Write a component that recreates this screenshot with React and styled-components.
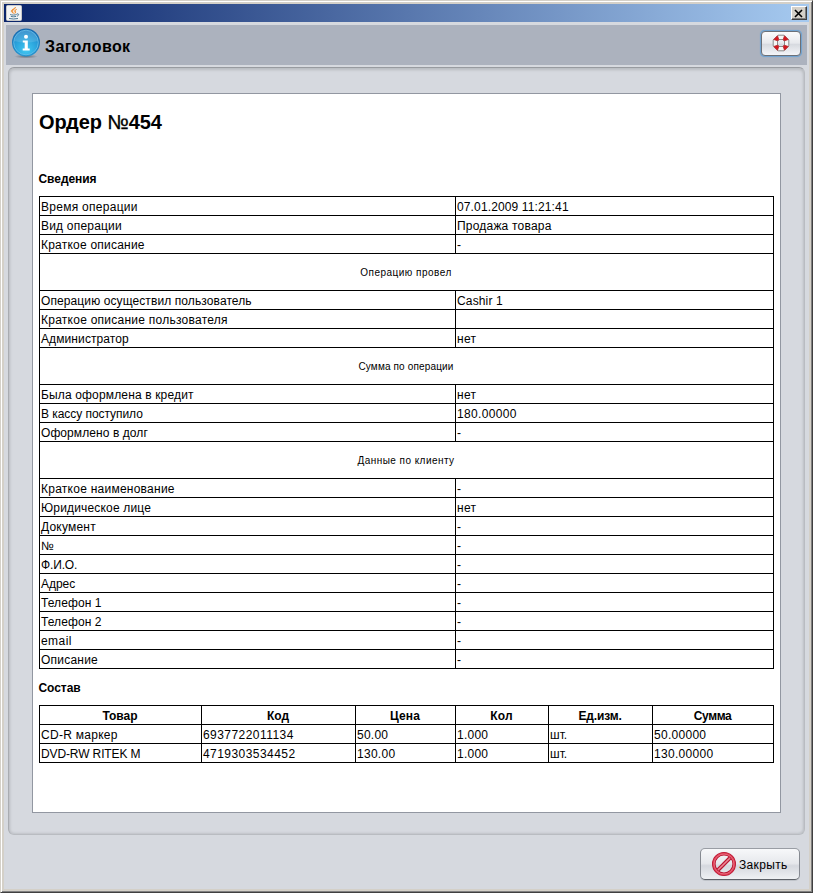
import React from "react";
import styled, { createGlobalStyle } from "styled-components";

const GlobalStyle = createGlobalStyle`
  * { box-sizing: border-box; }
  body { margin: 0; background: #d4d0c8; font-family: "Liberation Sans", Arial, sans-serif; color: #000; }
`;

const Frame = styled.div`
  width: 813px;
  height: 893px;
  padding: 2px;
  background: #d4d0c8;
  border: 1px solid;
  border-color: #d4d0c8 #404040 #404040 #d4d0c8;
  box-shadow: inset 1px 1px #fff, inset -1px -1px #808080;
`;
const Window = styled.div`
  display: flex;
  flex-direction: column;
  height: 100%;
  border: 1px solid #d4d0c8;
  background: #d6d9df;
`;
const TitleBar = styled.div`
  flex: none;
  display: flex;
  align-items: center;
  justify-content: space-between;
  height: 18px;
  padding: 0 2px;
  background: linear-gradient(90deg, #0a246a, #a6caf0);
`;
const AppIcon = styled.svg`
  display: block;
  width: 16px;
  height: 16px;
`;
const CloseBox = styled.button`
  display: flex;
  align-items: center;
  justify-content: center;
  width: 16px;
  height: 14px;
  padding: 0;
  background: #d4d0c8;
  border: 1px solid;
  border-color: #fff #404040 #404040 #fff;
  box-shadow: inset -1px -1px #808080;
`;
const Header = styled.header`
  flex: none;
  display: flex;
  align-items: center;
  height: 43px;
  margin: 0 2px;
  padding: 0 6px 5px 3px;
  background: #acb2be;
  border-top: 3px solid #d6d9df;
  background-clip: padding-box;
`;
const InfoIcon = styled.svg`
  display: block;
  width: 34px;
  height: 34px;
`;
const HeaderTitle = styled.h1`
  flex: 1;
  margin: 8px 0 0 2px;
  font-size: 16px;
  line-height: 20px;
  padding-top: 1px;
  letter-spacing: 0.4px;
`;
const HelpButton = styled.button`
  display: flex;
  align-items: center;
  justify-content: center;
  width: 40px;
  height: 25px;
  margin-top: 1px;
  padding: 0;
  border: 1px solid #6b7078;
  border-radius: 4px;
  background: linear-gradient(#fbfbfc, #e7e9ed 48%, #d7dae0 54%, #f4f5f8);
  box-shadow: 0 0 0 1px #73a4d1, 0 0 1px 1px #73a4d1;
`;
const Body = styled.main`
  flex: none;
  height: 768px;
  margin: 2px 4px 0;
  padding: 26px 24px 22px 23px;
  border: 1px solid;
  border-color: #989ba0 #b9bcc1 #b9bcc1 #a9acb1;
  border-radius: 6px;
  background: #d6d9df;
  box-shadow: inset 0 2px 3px #b9bcc1, inset 1px 0 3px #c0c3c8, inset -1px -1px 2px #c6c9ce;
`;
const Paper = styled.article`
  width: 749px;
  height: 720px;
  margin-top: -1px;
  padding: 14px 6px 0;
  background: #fff;
  border: 1px solid #9297a1;
`;
const DocTitle = styled.h2`
  margin: 0;
  height: 63px;
  font-size: 20px;
  line-height: 28px;
  letter-spacing: -0.1px;
`;
const NumberSign = styled.span`
  font-weight: 400;
  -webkit-text-stroke: 0.3px #000;
`;
const Section = styled.h3`
  margin: 0 0 0 -0.5px;
  height: ${(p) => (p.$compact ? 36 : 25)}px;
  padding-top: ${(p) => (p.$compact ? 11 : 0)}px;
  font-size: 12px;
  line-height: 16px;
  letter-spacing: -0.05px;
`;
const Grid = styled.div`
  width: 735px;
  border: 1px solid #000;
  border-bottom: 0;
`;
const Row = styled.div`
  display: grid;
  grid-template-columns: ${(p) => p.$columns};
  height: 19px;
  border-bottom: 1px solid #000;
`;
const Cell = styled.div`
  padding: ${(p) => (p.$head ? "2px 1px 0 0" : "2px 0 0 1px")};
  font-size: 12px;
  line-height: 16px;
  letter-spacing: ${(p) => p.$track || 0}px;
  font-weight: ${(p) => (p.$head ? 700 : 400)};
  text-align: ${(p) => (p.$head ? "center" : "left")};
  white-space: nowrap;
  &:not(:last-child) { border-right: 1px solid #000; }
`;
const Caption = styled.div`
  height: 37px;
  padding: 11px 1px 0 0;
  border-bottom: 1px solid #000;
  font-size: 10px;
  line-height: 16px;
  letter-spacing: ${(p) => p.$track}px;
  text-align: center;
`;
const Footer = styled.footer`
  display: flex;
  justify-content: flex-end;
  padding: 13px 9px 0;
`;
const CloseButton = styled.button`
  display: flex;
  align-items: center;
  width: 100px;
  height: 32px;
  padding: 0 0 0 10px;
  gap: 2px;
  border: 1px solid;
  border-color: #999da4 #858991 #5d6168;
  border-radius: 5px;
  background: linear-gradient(#f7f8fa, #e6e8ec 48%, #d5d8de 56%, #eff1f4);
  box-shadow: 0 1px #bfc3c9;
  font: 12px "Liberation Sans", Arial, sans-serif;
  letter-spacing: 0.35px;
  color: #000;
`;
const ButtonLabel = styled.span`
  padding-top: 2px;
`;

const WIDE = "416px 1fr";
const ITEMS = "162px 154px 100px 93px 104px 1fr";

const details = [
  [["Время операции", 0.28], ["07.01.2009 11:21:41", 0.13]],
  [["Вид операции", 0.2], ["Продажа товара", 0.2]],
  [["Краткое описание", 0.22], ["-"]],
  { caption: "Операцию провел", track: 0.48 },
  [["Операцию осуществил пользователь", 0.1], ["Cashir 1", 0.15]],
  [["Краткое описание пользователя", 0.25], [""]],
  [["Администратор", 0.1], ["нет", 0.3]],
  { caption: "Сумма по операции", track: 0.15 },
  [["Была оформлена в кредит", 0.15], ["нет", 0.3]],
  [["В кассу поступило", -0.05], ["180.00000", 0.35]],
  [["Оформлено в долг", 0.08], ["-"]],
  { caption: "Данные по клиенту", track: 0.45 },
  [["Краткое наименование", 0.25], ["-"]],
  [["Юридическое лице", 0.17], ["нет", 0.3]],
  [["Документ", 0.2], ["-"]],
  [["№", 0], ["-"]],
  [["Ф.И.О.", -0.15], ["-"]],
  [["Адрес", -0.05], ["-"]],
  [["Телефон 1", 0.08], ["-"]],
  [["Телефон 2", 0.08], ["-"]],
  [["email", 0.45], ["-"]],
  [["Описание", 0.22], ["-"]],
];

const itemHead = [["Товар"], ["Код"], ["Цена", 0.1], ["Кол", 0.1], ["Ед.изм.", -0.15], ["Сумма", -0.38]];
const items = [
  [["CD-R маркер", 0.28], ["6937722011134", 0.45], ["50.00", 0.25], ["1.000", 0.25], ["шт."], ["50.00000", 0.28]],
  [["DVD-RW RITEK M", -0.12], ["4719303534452", 0.45], ["130.00", 0.28], ["1.000", 0.25], ["шт."], ["130.00000", 0.3]],
];

function Cells({ data, columns, head }) {
  return (
    <Row $columns={columns}>
      {data.map(([text, track], i) => (
        <Cell key={i} $track={track} $head={head}>{text}</Cell>
      ))}
    </Row>
  );
}

const JavaCup = () => (
  <AppIcon viewBox="0 0 16 16">
    <rect x=".5" y=".5" width="15" height="15" rx="1" fill="#f3f4f4" stroke="#c9c9c9" />
    <path d="M9.500 2C10 4 6.200 4.600 6.600 6.500c.2 1 1 1.400 1.200 2C5.800 7.500 4.400 6.400 6 4.800 7.200 3.700 9.300 3.400 9.500 2M10.800 4.300c-2 .8-2.700 1.500-2 2.500.5.700.3 1.200-.2 1.700 2-1.200.9-2 .7-2.600-.1-.5.5-1 1.500-1.600" fill="#ef8622" stroke="#ef8622" strokeWidth=".5" />
    <path d="M4.200 9.500c1.800.8 4.800.7 6.400 0M4.800 11.300c1.500.6 3.900.6 5.400 0M3 13.500q4.500 1 9 0M10.800 8.900c2.400-.5 2.500 1.500.2 2.300" fill="none" stroke="#4c7793" />
  </AppIcon>
);

const Info = () => (
  <InfoIcon viewBox="0 0 34 34">
    <defs>
      <linearGradient id="ring" x2="0" y2="1"><stop stopColor="#1767ad" /><stop offset="1" stopColor="#2897d0" /></linearGradient>
      <radialGradient id="disc" cy=".8" r=".75"><stop stopColor="#42c8f1" /><stop offset=".6" stopColor="#2aa3dc" /><stop offset="1" stopColor="#2589ca" /></radialGradient>
      <radialGradient id="shade"><stop stopColor="#4b515c" stopOpacity=".7" /><stop offset="1" stopColor="#4b515c" stopOpacity="0" /></radialGradient>
    </defs>
    <ellipse cx="17" cy="30.500" rx="12" ry="2" fill="url(#shade)" />
    <circle cx="17" cy="16.500" r="14" fill="url(#ring)" />
    <circle cx="17" cy="16.500" r="12.300" fill="url(#disc)" stroke="#68c2ec" strokeWidth=".8" />
    <path d="M5.500 15a11.500 10.500 0 0 1 23 0q-11.500 3-23 0" fill="#fff" opacity=".13" />
    <circle cx="17" cy="10.700" r="2" fill="#fff" />
    <path d="M13.800 14.500h5v8h1.900v2h-7v-2h2v-6h-1.900z" fill="#fff" />
  </InfoIcon>
);

const Lifebuoy = () => (
  <svg width="18" height="18" viewBox="0 0 18 18">
    <path d="M6 1.200h6L16.800 6v6L12 16.800H6L1.200 12V6zM7 5.500L5.500 7v4L7 12.500h4l1.500-1.500V7L11 5.500z" fill="#f6f6f6" fillRule="evenodd" stroke="#8b8b8b" />
    <path d="M5.500 1.800l1.300 4-1 1-4-1.300zM12.500 1.800l-1.300 4 1 1 4-1.300zM5.500 16.200l1.300-4-1-1-4 1.300zM12.500 16.200l-1.300-4 1-1 4 1.300z" fill="#d8141c" stroke="#b8282d" strokeWidth=".9" />
  </svg>
);

const Forbidden = () => (
  <svg width="26" height="26" viewBox="0 0 26 26">
    <path d="M7.200 18.800L18.800 7.200" stroke="#b81430" strokeWidth="4" />
    <path d="M7.200 18.800L18.800 7.200" stroke="#ee8796" strokeWidth="1.600" />
    <circle cx="13" cy="13" r="10.200" fill="none" stroke="#b81430" strokeWidth="3.600" />
    <circle cx="13" cy="13" r="10.300" fill="none" stroke="#df4058" strokeWidth="1.800" />
    <circle cx="13" cy="13" r="9.900" fill="none" stroke="#ee8796" strokeWidth=".6" />
  </svg>
);

export default function App() {
  return (
    <Frame>
      <GlobalStyle />
      <Window>
        <TitleBar>
          <JavaCup />
          <CloseBox aria-label="Закрыть">
            <svg width="10" height="9" viewBox="0 0 10 9"><path d="M1 1l7 7M8 1l-7 7" stroke="#000" strokeWidth="1.600" /></svg>
          </CloseBox>
        </TitleBar>
        <Header>
          <Info />
          <HeaderTitle>Заголовок</HeaderTitle>
          <HelpButton><Lifebuoy /></HelpButton>
        </Header>
        <Body>
          <Paper>
            <DocTitle>Ордер <NumberSign>№</NumberSign>454</DocTitle>
            <Section>Сведения</Section>
            <Grid>
              {details.map((row, i) =>
                Array.isArray(row)
                  ? <Cells key={i} data={row} columns={WIDE} />
                  : <Caption key={i} $track={row.track}>{row.caption}</Caption>
              )}
            </Grid>
            <Section $compact>Состав</Section>
            <Grid>
              <Cells data={itemHead} columns={ITEMS} head />
              {items.map((row, i) => <Cells key={i} data={row} columns={ITEMS} />)}
            </Grid>
          </Paper>
        </Body>
        <Footer>
          <CloseButton><Forbidden /><ButtonLabel>Закрыть</ButtonLabel></CloseButton>
        </Footer>
      </Window>
    </Frame>
  );
}
